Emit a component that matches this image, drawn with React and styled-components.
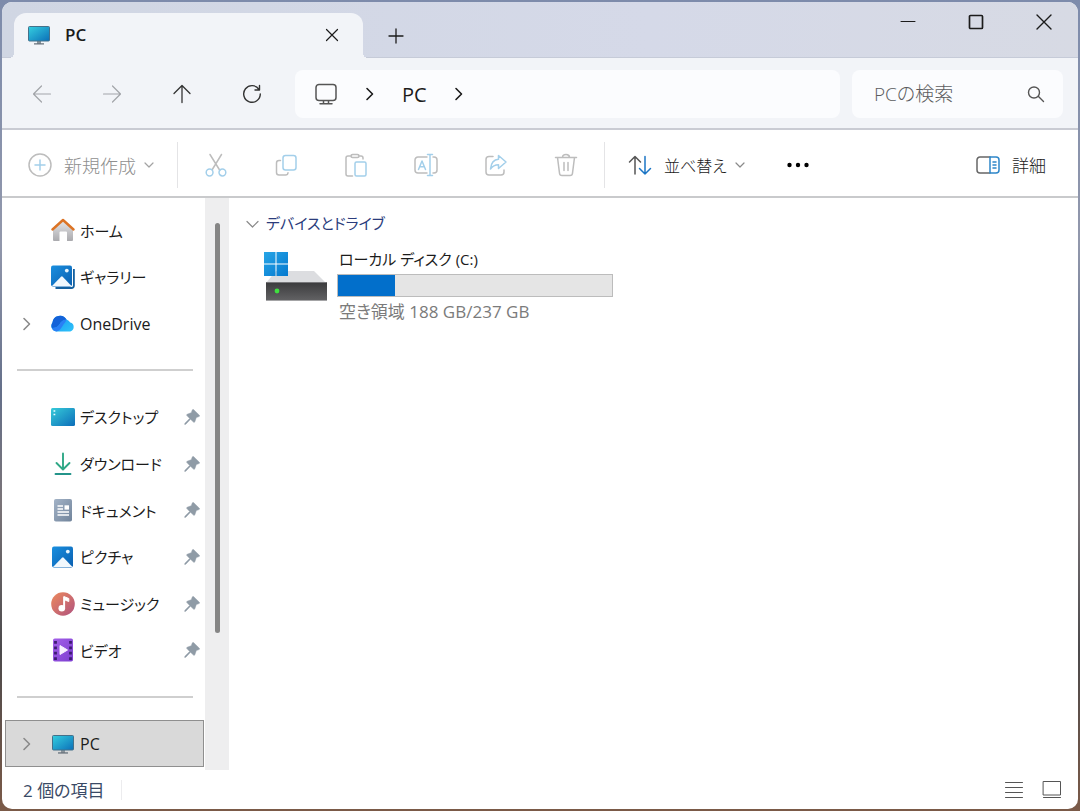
import styled, { createGlobalStyle } from "styled-components";

const GlobalStyle = createGlobalStyle`
  * {
    box-sizing: border-box;
  }

  body {
    margin: 0;
    background: linear-gradient(180deg, #7d8bab 0%, #9298ac 30%, #65708a 48%, #7a7478 62%, #4c4a4c 80%, #7b5a48 100%);
    color: #1b1b1b;
    font-family: "Open Sans", "Noto Sans CJK JP", sans-serif;
    font-size: 17px;
    font-feature-settings: "palt";
  }

  button, input {
    font: inherit;
    font-feature-settings: inherit;
    color: inherit;
  }

  svg {
    display: block;
    flex: none;
  }
`;

const Desktop = styled.div`
  display: flex;
  min-height: 100vh;
  padding: 2px;
`;

const Window = styled.div`
  display: flex;
  flex-direction: column;
  flex: 1;
  min-width: 0;
  border-radius: 10px;
  background-color: #fff;
  overflow: hidden;
`;

const TitleBar = styled.header`
  display: flex;
  height: 56px;
  padding-left: 12px;
  background: linear-gradient(90deg, #d0d6e3 0%, #d5d9e8 60%, #d7dae4 100%);
  box-shadow: inset 0 -1px 0 #c6cbd8;
`;

const Tab = styled.div`
  position: relative;
  display: flex;
  align-items: center;
  width: 349px;
  margin-top: 11px;
  padding: 0 16px 2px 13px;
  border-radius: 12px 12px 0 0;
  background-color: #f2f4f8;

  &::before,
  &::after {
    content: "";
    position: absolute;
    bottom: 0;
    width: 5px;
    height: 5px;
  }

  &::before {
    left: -5px;
    background: radial-gradient(circle at 0 0, transparent 5px, #f2f4f8 5px);
  }

  &::after {
    right: -5px;
    background: radial-gradient(circle at 100% 0, transparent 5px, #f2f4f8 5px);
  }
`;

const TabTitle = styled.span`
  flex: 1;
  margin-left: 14px;
  font-weight: 600;
`;

const PlainButton = styled.button`
  display: flex;
  align-items: center;
  justify-content: center;
  width: ${(props) => props.$width || 30}px;
  height: ${(props) => props.$height || 30}px;
  padding: 0;
  border: none;
  border-radius: 4px;
  background: none;
`;

const NewTab = styled(PlainButton)`
  align-self: flex-end;
  margin: 0 auto 0 18px;
`;

const NavBar = styled.nav`
  display: flex;
  align-items: center;
  height: 72px;
  padding: 2px 15px 0 5px;
  border-bottom: 2px solid #c9cbd3;
  background-color: #f2f4f8;
`;

const AddressBar = styled.div`
  display: flex;
  align-items: center;
  flex: 1;
  height: 48px;
  margin: 0 12px 0 8px;
  padding-left: 19px;
  border-radius: 8px;
  background-color: #fbfcfe;
  font-size: 20px;
`;

const Crumb = styled.span`
  margin: 0 25px;
`;

const SearchBox = styled.label`
  display: flex;
  align-items: center;
  width: 211px;
  height: 48px;
  padding: 0 18px 0 22px;
  border-radius: 8px;
  background-color: #fbfcfe;
`;

const SearchInput = styled.input`
  flex: 1;
  min-width: 0;
  padding: 0;
  border: none;
  outline: none;
  background: none;
  font-size: 19px;
  font-weight: 300;

  &::placeholder {
    color: #5c5c60;
    opacity: 1;
  }
`;

const Toolbar = styled.div`
  display: flex;
  align-items: center;
  height: 68px;
  padding: 3px 32px 0 26px;
  border-bottom: 2px solid #c9cacc;
`;

const ToolButton = styled.button`
  display: flex;
  align-items: center;
  gap: 12px;
  height: 46px;
  padding: 0;
  border: none;
  background: none;
  font-size: ${(props) => props.$size || 17}px;
  font-weight: 300;
  white-space: nowrap;

  &:disabled {
    color: #8f8f8f;
  }
`;

const Separator = styled.span`
  width: 1px;
  height: 46px;
  margin: ${(props) => props.$margin};
  background-color: #e4e4e6;
`;

const MenuLabel = styled.span`
  display: flex;
  align-items: center;
  gap: 8px;
`;

const Spacer = styled.span`
  flex: 1;
`;

const Body = styled.div`
  display: flex;
  flex: 1;
`;

const Sidebar = styled.ul`
  display: grid;
  grid-auto-rows: minmax(40px, 1fr);
  width: 203px;
  margin: 0;
  padding: 9px 1px 3px 3px;
  list-style: none;
`;

const SideItem = styled.li`
  display: flex;
`;

const SideLink = styled.a`
  display: flex;
  align-items: center;
  flex: 1;
  padding-right: 3px;
  border: 1px solid ${(props) => (props.$selected ? "#8f8f8f" : "transparent")};
  background-color: ${(props) => (props.$selected ? "#d9d9d9" : "transparent")};
  color: inherit;
  font-size: 15px;
  text-decoration: none;
  white-space: nowrap;

  &:lang(en) {
    font-size: 16px;
  }
`;

const Expander = styled.span`
  width: 31px;
  margin-left: 14px;
`;

const SideLabel = styled.span`
  flex: 1;
  margin-left: 5px;
`;

const Divider = styled.hr`
  flex: 1;
  align-self: center;
  height: 2px;
  margin: 0 11px 0 12px;
  border: none;
  background-color: #cfcfcf;
`;

const ScrollTrack = styled.div`
  display: flex;
  justify-content: center;
  width: 24px;
  padding-top: 25px;
  background-color: #eeeeef;
`;

const ScrollThumb = styled.div`
  width: 5px;
  height: 75%;
  border-radius: 3px;
  background-color: #858585;
`;

const Content = styled.main`
  flex: 1;
  padding: 12px 17px;
`;

const GroupHeader = styled.h2`
  display: flex;
  align-items: center;
  gap: 7px;
  margin: 0;
  color: #2b3c7c;
  font-size: 15px;
  font-weight: 400;
  line-height: 26px;
`;

const Drive = styled.div`
  display: flex;
  gap: 9px;
  margin: 11px 0 0 17px;
`;

const DriveIconSlot = styled.div`
  padding-top: 3px;
`;

const DriveInfo = styled.div`
  flex: 0 1 276px;
  line-height: 24px;
`;

const DriveName = styled.div`
  padding-left: 2px;
  font-size: 15px;
`;

const DriveSpace = styled.div`
  padding-left: 2px;
  color: #7b7b7b;
`;

const Meter = styled.div`
  height: 23px;
  margin: 3px 0;
  border: 1px solid #bcbcbc;
  background-color: #e5e5e5;
`;

const MeterFill = styled.div`
  height: 100%;
  background-color: #026fcb;
`;

const StatusBar = styled.footer`
  display: flex;
  align-items: center;
  height: 39px;
  padding: 0 7px 0 21px;
  color: #3a4a66;
`;

const StatusDivider = styled.span`
  width: 1px;
  height: 20px;
  margin: 0 auto 0 16px;
  background-color: #ececee;
`;

function Line({ d, size = 24, color = "#1b1b1b", width = 1.5 }) {
  return (
    <svg width={size} height={size} viewBox={`0 0 ${size} ${size}`} fill="none" stroke={color} strokeWidth={width} strokeLinecap="round" strokeLinejoin="round">
      <path d={d} />
    </svg>
  );
}

/* two-tone toolbar icon: grey outline plus a blue accent */
function Duo({ grey, blue, ink = "#bdbdbd", accent = "#a3cfea" }) {
  return (
    <svg width="24" height="24" viewBox="0 0 24 24" fill="none" strokeWidth="1.5" strokeLinecap="round" strokeLinejoin="round">
      <path d={grey} stroke={ink} />
      {blue && <path d={blue} stroke={accent} />}
    </svg>
  );
}

const ChevronRight = ({ color = "#1b1b1b" }) => (
  <Line size={14} d="M4 1.5l5.500 5.500L4 12.500" color={color} width={1.6} />
);

const ChevronDown = ({ color = "#8a8a8a", size = 10 }) => (
  <Line size={size} d={`M1 ${size / 2 - 2}l${size / 2 - 1} ${size / 2 - 1}l${size / 2 - 1} -${size / 2 - 1}`} color={color} width={1.2} />
);

function MonitorIcon({ id }) {
  return (
    <svg width="24" height="24" viewBox="0 0 24 24">
      <defs>
        <linearGradient id={id} x1="0" y1="0" x2="1" y2="1">
          <stop offset="0" stopColor="#35cfe0" />
          <stop offset="1" stopColor="#0b6fb8" />
        </linearGradient>
      </defs>
      <path d="M10 18h4v3h-4z" fill="#8a9299" />
      <path d="M7 20.300h10v1.300H7z" fill="#66717b" />
      <rect x="1.500" y="3.500" width="21" height="14.500" rx="1" fill={`url(#${id})`} stroke="#45718a" />
    </svg>
  );
}

function HomeIcon() {
  return (
    <svg width="24" height="24" viewBox="0 0 24 24">
      <defs>
        <linearGradient id="wall" x1="0" y1="0" x2="0" y2="1">
          <stop offset="0" stopColor="#e6e6e8" />
          <stop offset="1" stopColor="#aaaaae" />
        </linearGradient>
      </defs>
      <path d="M2 11.500L12 2.500l10 9V22a1 1 0 0 1-1 1h-5v-8.500a1 1 0 0 0-1-1H9.500a1 1 0 0 0-1 1V23H3a1 1 0 0 1-1-1z" fill="url(#wall)" />
      <path d="M1.500 11.500L12 2l10.500 9.500" fill="none" stroke="#dc7426" strokeWidth="2.400" strokeLinecap="round" strokeLinejoin="round" />
    </svg>
  );
}

function PictureIcon({ id, stacked }) {
  return (
    <svg width="24" height="24" viewBox="0 0 24 24">
      <defs>
        <linearGradient id={id} x1="0" y1="0" x2="1" y2="1">
          <stop offset="0" stopColor="#1a8fdf" />
          <stop offset="1" stopColor="#0a5fb0" />
        </linearGradient>
      </defs>
      {stacked && <path d="M22.900 4V20.500a2.500 2.500 0 0 1-2.500 2.500H4.500" fill="none" stroke="#14609f" strokeWidth="1.800" />}
      <g transform={stacked ? "translate(-1 -1)" : ""}>
        <rect x="1" y="1.500" width="21" height="21" rx="2" fill={`url(#${id})`} />
        <path d="M2 22l9-9.200a1.200 1.200 0 0 1 1.700 0L21.500 22z" fill="#f1f8fd" />
        <circle cx="16.800" cy="6.600" r="1.900" fill="#e6f4fd" />
      </g>
    </svg>
  );
}

function OneDriveIcon() {
  return (
    <svg width="24" height="24" viewBox="0 0 24 24">
      <defs>
        <linearGradient id="cloud" x1="0" y1="0" x2="1" y2="1">
          <stop offset="0" stopColor="#1590ee" />
          <stop offset="1" stopColor="#2fc4fa" />
        </linearGradient>
      </defs>
      <path d="M6 19.500A5.500 5.500 0 0 1 1.500 10.600 7.500 7.500 0 0 1 15.500 7.500a6 6 0 0 1 3.700 3.100A4.600 4.600 0 0 1 19.300 19.500z" fill="url(#cloud)" />
      <path d="M1.500 10.600A7.500 7.500 0 0 1 15.500 7.500c-3.500.200-5.300 2-7 4.700S4.500 16 1 16a5.500 5.500 0 0 1 .5-5.400z" fill="#1462d8" />
      <path d="M1 16c3.500 0 6-1.300 7.500-3.800S12 7.700 15.500 7.500c-1 3-2.500 4-4 6.500s-3 5-6 5.400A5.300 5.300 0 0 1 1 16z" fill="#2a7ff5" />
    </svg>
  );
}

function DesktopIcon() {
  return (
    <svg width="24" height="24" viewBox="0 0 24 24">
      <defs>
        <linearGradient id="desk" x1="0" y1="0" x2="1" y2="1">
          <stop offset="0" stopColor="#36cbd9" />
          <stop offset="1" stopColor="#0c6db9" />
        </linearGradient>
      </defs>
      <rect x="0" y="3" width="24" height="18" rx="1.500" fill="url(#desk)" />
      <path d="M2.500 6h1.800M2.500 9.500h1.800" stroke="#e8fbff" strokeWidth="1.500" />
    </svg>
  );
}

function DownloadIcon() {
  return (
    <svg width="24" height="24" viewBox="0 0 24 24" fill="none" stroke="#2fa886" strokeWidth="1.900" strokeLinecap="round" strokeLinejoin="round">
      <path d="M12 1.500V17M5.500 11l6.500 6.500 6.500-6.500" />
      <path d="M4.500 22h15" stroke="#23948a" />
    </svg>
  );
}

function DocumentIcon() {
  return (
    <svg width="24" height="24" viewBox="0 0 24 24">
      <defs>
        <linearGradient id="doc" x1="0" y1="0" x2="1" y2="1">
          <stop offset="0" stopColor="#a3b3c7" />
          <stop offset="1" stopColor="#71849b" />
        </linearGradient>
      </defs>
      <rect x="3" y="1" width="18" height="22.500" rx="1.800" fill="url(#doc)" />
      <path d="M6.500 8h5.500M6.500 11h5.500M6.500 14h11.500M6.500 17h11.500" stroke="#fff" strokeWidth="1.300" />
      <path d="M13.500 7.300H18V11.600h-4.500z" fill="#fff" />
    </svg>
  );
}

function MusicIcon() {
  return (
    <svg width="24" height="24" viewBox="0 0 24 24">
      <defs>
        <linearGradient id="music" x1="0" y1="0" x2="1" y2="1">
          <stop offset="0" stopColor="#ed8a5c" />
          <stop offset="1" stopColor="#b0527f" />
        </linearGradient>
      </defs>
      <circle cx="12" cy="12" r="11.800" fill="url(#music)" />
      <path d="M12.800 15.800V4.500l5 2v3l-3.500-1.300" fill="#fff" stroke="#fff" strokeLinejoin="round" />
      <path d="M13.300 5v11" stroke="#fff" strokeWidth="1.600" />
      <circle cx="10.800" cy="16.200" r="3.300" fill="#fff" />
    </svg>
  );
}

function VideoIcon() {
  return (
    <svg width="24" height="24" viewBox="0 0 24 24">
      <defs>
        <linearGradient id="video" x1="0" y1="0" x2="1" y2="1">
          <stop offset="0" stopColor="#a35fe8" />
          <stop offset="1" stopColor="#7d3fd0" />
        </linearGradient>
      </defs>
      <rect x="2" y="0.500" width="20" height="23" rx="1.800" fill="url(#video)" />
      <path d="M4.500 3v20M19.500 3v20" stroke="#3d1c72" strokeWidth="2.800" strokeDasharray="2.800 2.600" />
      <path d="M9 7.500v9l7.500-4.500z" fill="#f7f0ff" stroke="#f7f0ff" strokeLinejoin="round" />
    </svg>
  );
}

function PinIcon() {
  return (
    <svg width="16" height="16" viewBox="0 0 16 16">
      <path d="M9.700.7L15.300 6.200c.500.500.200 1.200-.400 1.400L12.300 8.600l-1.500 4.200c-.200.600-.900.700-1.300.300L6.500 10.200 1.800 15.200.7 15.500.9 14.300 5.700 9.400 2.900 6.600c-.4-.4-.3-1.100.3-1.300L7.300 3.700l1-2.700c.2-.6.900-.8 1.400-.3z" fill="#8f9ba6" stroke="#8f9ba6" strokeWidth="0.500" />
    </svg>
  );
}

function DriveIcon() {
  return (
    <svg width="65" height="54" viewBox="0 0 65 54">
      <defs>
        <linearGradient id="case" x1="0" y1="0" x2="0" y2="1">
          <stop offset="0" stopColor="#3a3a3c" />
          <stop offset="1" stopColor="#636365" />
        </linearGradient>
        <linearGradient id="logo" x1="0" y1="0" x2="1" y2="1">
          <stop offset="0" stopColor="#27a5e6" />
          <stop offset="1" stopColor="#0579cf" />
        </linearGradient>
      </defs>
      <path d="M13 21h38l12 12H3z" fill="#dcdde0" />
      <rect x="3" y="32" width="61" height="19" rx="1" fill="url(#case)" />
      <path d="M3 50.500h61" stroke="#a4a4a6" />
      <path d="M3.500 32.500h60" stroke="#77777a" />
      <circle cx="14" cy="41" r="2.400" fill="#3fe03f" />
      <path d="M1 2h11.500v11.500H1zM13.500 2h11.500v11.500h-11.500zM1 14.500h11.500v11.500H1zM13.500 14.500h11.500v11.500h-11.500z" fill="url(#logo)" />
    </svg>
  );
}

const editActions = [
  {
    label: "切り取り",
    grey: "M6 1.500l9.300 15M17.500 1.500L8.300 16.500",
    blue: "M9 19.500a3.400 3.400 0 1 1-6.800 0a3.400 3.400 0 1 1 6.800 0M21.800 19.500a3.400 3.400 0 1 1-6.800 0a3.400 3.400 0 1 1 6.800 0",
  },
  {
    label: "コピー",
    grey: "M6.500 7.500H5a2.500 2.500 0 0 0-2.500 2.500v9.500A2.500 2.500 0 0 0 5 22h6.500a2.500 2.500 0 0 0 2.500-2.300",
    blue: "M11.500 2.500h8a2.500 2.500 0 0 1 2.500 2.500v9.500a2.500 2.500 0 0 1-2.500 2.500h-8A2.500 2.500 0 0 1 9 14.500V5a2.500 2.500 0 0 1 2.500-2.500z",
  },
  {
    label: "貼り付け",
    grey: "M7.500 3H4a2 2 0 0 0-2 2v16a2 2 0 0 0 2 2h4.500M14.500 3H17a2 2 0 0 1 2 2v1M8.500 1.500h5a1.500 1.500 0 0 1 0 3h-5a1.500 1.500 0 0 1 0-3z",
    blue: "M12.500 9h8a1.500 1.500 0 0 1 1.500 1.500v11a1.500 1.500 0 0 1-1.500 1.500h-8a1.500 1.500 0 0 1-1.500-1.500v-11A1.500 1.500 0 0 1 12.500 9z",
  },
  {
    label: "名前の変更",
    grey: "M13 4H4a3 3 0 0 0-3 3v10a3 3 0 0 0 3 3h9M19 4h1a3 3 0 0 1 3 3v10a3 3 0 0 1-3 3h-1",
    blue: "M4.500 16.500L8 8l3.500 8.500M5.700 13.800h4.600M16 1.500v21M13.500 1.500h5M13.500 22.500h5",
  },
  {
    label: "共有",
    grey: "M9 3.500H5a3 3 0 0 0-3 3V19a3 3 0 0 0 3 3h12a3 3 0 0 0 3-3v-2",
    blue: "M14.500 2.500L22 9l-7.500 6.500v-3.800c-4 0-6 1.300-8 4.300.500-5 3-9.500 8-9.700z",
  },
  {
    label: "削除",
    grey: "M1.500 4.500h21M8.500 4.500a3.500 3 0 0 1 7 0M3.500 4.500l2 15.700A2.500 2.500 0 0 0 8 22.500h8a2.500 2.500 0 0 0 2.500-2.300l2-15.700M10 9.500v8M14 9.500v8",
  },
];

const sideItems = [
  { label: "ホーム", icon: <HomeIcon /> },
  { label: "ギャラリー", icon: <PictureIcon id="gallery" stacked /> },
  { label: "OneDrive", lang: "en", icon: <OneDriveIcon />, expandable: true },
  null,
  { label: "デスクトップ", icon: <DesktopIcon />, pinned: true },
  { label: "ダウンロード", icon: <DownloadIcon />, pinned: true },
  { label: "ドキュメント", icon: <DocumentIcon />, pinned: true },
  { label: "ピクチャ", icon: <PictureIcon id="pictures" />, pinned: true },
  { label: "ミュージック", icon: <MusicIcon />, pinned: true },
  { label: "ビデオ", icon: <VideoIcon />, pinned: true },
  null,
  { label: "PC", lang: "en", icon: <MonitorIcon id="sidePc" />, expandable: true, selected: true },
];

const totalGb = 237;
const freeGb = 188;

function App() {
  return (
    <Desktop lang="ja">
      <GlobalStyle />
      <Window>
        <TitleBar>
          <Tab>
            <MonitorIcon id="tabPc" />
            <TabTitle>PC</TabTitle>
            <PlainButton aria-label="タブを閉じる">
              <Line size={14} d="M1.500 1.500l11 11M12.500 1.500l-11 11" width={1.2} />
            </PlainButton>
          </Tab>
          <NewTab $height={44} aria-label="新しいタブ">
            <Line size={16} d="M8 1v14M1 8h14" width={1.3} />
          </NewTab>
          <PlainButton $width={68} $height={40} aria-label="最小化">
            <Line size={16} d="M1 7.500h14" width={1} />
          </PlainButton>
          <PlainButton $width={68} $height={40} aria-label="最大化">
            <Line size={16} d="M2.500 1.500h11a1 1 0 0 1 1 1v11a1 1 0 0 1-1 1h-11a1 1 0 0 1-1-1v-11a1 1 0 0 1 1-1z" width={1.7} />
          </PlainButton>
          <PlainButton $width={68} $height={40} aria-label="閉じる">
            <Line size={16} d="M1 1l14 14M15 1L1 15" width={1.4} />
          </PlainButton>
        </TitleBar>

        <NavBar>
          <PlainButton $width={70} $height={48} aria-label="戻る" disabled>
            <Line size={20} d="M18.500 10H2M9.500 2L1.500 10l8 8" color="#a2a4a9" width={1.2} />
          </PlainButton>
          <PlainButton $width={70} $height={48} aria-label="進む" disabled>
            <Line size={20} d="M1.500 10H18M10.500 2l8 8-8 8" color="#a2a4a9" width={1.2} />
          </PlainButton>
          <PlainButton $width={70} $height={48} aria-label="上へ">
            <Line size={20} d="M10 18.500V2M2 9.500L10 1.500l8 8" color="#333" width={1.3} />
          </PlainButton>
          <PlainButton $width={70} $height={48} aria-label="更新">
            <Line size={20} d="M17 5.500A8.300 8.300 0 1 0 18.300 10M17.500 1.500v4.500H13" color="#333" width={1.4} />
          </PlainButton>
          <AddressBar>
            <Line d="M5 2.500h14a3 3 0 0 1 3 3v10a3 3 0 0 1-3 3H5a3 3 0 0 1-3-3v-10a3 3 0 0 1 3-3zM9.500 18.500v3M14.500 18.500v3M6 21.800h12" color="#555" width={1.5} />
            <Crumb>
              <ChevronRight />
            </Crumb>
            <span>PC</span>
            <Crumb>
              <ChevronRight />
            </Crumb>
          </AddressBar>
          <SearchBox>
            <SearchInput type="text" placeholder="PCの検索" aria-label="PCの検索" />
            <Line size={18} d="M12.500 7.500a5.500 5.500 0 1 1-11 0a5.500 5.500 0 1 1 11 0M11.500 11.500l5 5" color="#555" width={1.4} />
          </SearchBox>
        </NavBar>

        <Toolbar>
          <ToolButton $size={18} disabled>
            <Duo grey="M23 12a11 11 0 1 1-22 0a11 11 0 1 1 22 0" blue="M12 7v10M7 12h10" />
            <MenuLabel>
              新規作成
              <ChevronDown color="#a3a3a3" />
            </MenuLabel>
          </ToolButton>
          <Separator $margin="0 3px 0 23px" />
          {editActions.map((action) => (
            <PlainButton key={action.label} $width={70} $height={46} aria-label={action.label} disabled>
              <Duo grey={action.grey} blue={action.blue} />
            </PlainButton>
          ))}
          <Separator $margin="0 23px 0 3px" />
          <ToolButton $size={16}>
            <Duo grey="M7 21V3.500M1.500 9L7 3.500 12.500 9" blue="M17 3.500V21M11.500 15.500L17 21l5.500-5.500" ink="#555" accent="#1b75c4" />
            <MenuLabel>
              並べ替え
              <ChevronDown />
            </MenuLabel>
          </ToolButton>
          <PlainButton $width={106} $height={46} aria-label="もっと見る">
            <svg width="24" height="6" viewBox="0 0 24 6">
              <circle cx="3.500" cy="3" r="2.200" />
              <circle cx="12" cy="3" r="2.200" />
              <circle cx="20.500" cy="3" r="2.200" />
            </svg>
          </PlainButton>
          <Spacer />
          <ToolButton>
            <Duo grey="M14 4H4a3 3 0 0 0-3 3v10a3 3 0 0 0 3 3h10" blue="M14 4h6a3 3 0 0 1 3 3v10a3 3 0 0 1-3 3h-6zM17 9h3M17 12h3M17 15h3" ink="#666" accent="#2e86c9" />
            詳細
          </ToolButton>
        </Toolbar>

        <Body>
          <Sidebar>
            {sideItems.map((item, i) => (
              <SideItem key={i}>
                {item ? (
                  <SideLink href="#" lang={item.lang} $selected={item.selected}>
                    <Expander>{item.expandable && <ChevronRight color="#8a8a8a" />}</Expander>
                    {item.icon}
                    <SideLabel>{item.label}</SideLabel>
                    {item.pinned && <PinIcon />}
                  </SideLink>
                ) : (
                  <Divider />
                )}
              </SideItem>
            ))}
          </Sidebar>
          <ScrollTrack>
            <ScrollThumb />
          </ScrollTrack>
          <Content>
            <GroupHeader>
              <ChevronDown size={13} />
              デバイスとドライブ
            </GroupHeader>
            <Drive>
              <DriveIconSlot>
                <DriveIcon />
              </DriveIconSlot>
              <DriveInfo>
                <DriveName>ローカル ディスク (C:)</DriveName>
                <Meter role="progressbar" aria-label="使用済み領域" aria-valuenow={totalGb - freeGb} aria-valuemax={totalGb}>
                  <MeterFill style={{ width: `${((totalGb - freeGb) / totalGb) * 100}%` }} />
                </Meter>
                <DriveSpace>
                  空き領域 {freeGb} GB/{totalGb} GB
                </DriveSpace>
              </DriveInfo>
            </Drive>
          </Content>
        </Body>

        <StatusBar>
          2 個の項目
          <StatusDivider />
          <PlainButton $width={38} aria-label="詳細表示">
            <Line size={20} d="M1.500 2.500h17M1.500 7.500h17M1.500 12.500h17M1.500 17.500h17" color="#555" width={1} />
          </PlainButton>
          <PlainButton $width={38} aria-label="大アイコン表示">
            <Line size={20} d="M1.500 1.500h17v13.500h-17zM1.500 17.500h17" color="#555" width={1} />
          </PlainButton>
        </StatusBar>
      </Window>
    </Desktop>
  );
}

export default App;
